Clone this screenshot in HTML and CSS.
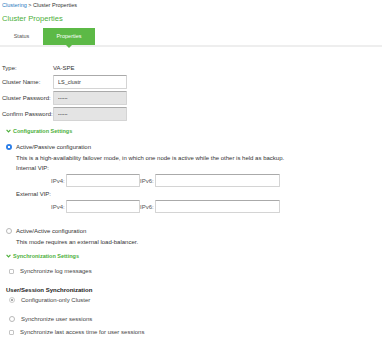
FILE: index.html
```html
<!DOCTYPE html>
<html lang="en">
<head>
  <meta charset="UTF-8" />
  <meta name="viewport" content="width=device-width, initial-scale=1.0" />
  <title>Cluster Properties</title>
  <link rel="stylesheet" href="styles.css">
</head>
<body>
  <div class="crumbs"><a href="#">Clustering</a> &gt; Cluster Properties</div>
  <h1 class="title">Cluster Properties</h1>
  <div class="tabs">
    <span class="tab">Status</span>
    <span class="tab active">Properties</span>
  </div>

  <div class="fields">
    <span>Type:</span><span>VA-SPE</span>
    <span>Cluster Name:</span><input class="box" type="text" value="LS_clustr" />
    <span>Cluster Password:</span><input class="box locked" type="text" value="••••••" />
    <span>Confirm Password:</span><input class="box locked" type="text" value="••••••" />
  </div>

  <div class="section-head head-config">
    <svg class="chev" viewBox="0 0 6 4"><path d="M0.7 0.7 L3 3 L5.3 0.7" /></svg>
    Configuration Settings
  </div>

  <div class="option opt-passive"><span class="radio on"></span>Active/Passive configuration</div>
  <p class="note">This is a high-availability failover mode, in which one node is active while the other is held as backup.</p>
  <div class="vip-label">Internal VIP:</div>
  <div class="vip-row">
    <span class="ip">IPv4:</span><input class="box v4" type="text" />
    <span class="ip">IPv6:</span><input class="box v6" type="text" />
  </div>
  <div class="vip-label ext">External VIP:</div>
  <div class="vip-row">
    <span class="ip">IPv4:</span><input class="box v4" type="text" />
    <span class="ip">IPv6:</span><input class="box v6" type="text" />
  </div>

  <div class="option opt-active"><span class="radio"></span>Active/Active configuration</div>
  <p class="note">This mode requires an external load-balancer.</p>

  <div class="section-head head-sync">
    <svg class="chev" viewBox="0 0 6 4"><path d="M0.7 0.7 L3 3 L5.3 0.7" /></svg>
    Synchronization Settings
  </div>

  <div class="check-row log-row"><span class="check"></span>Synchronize log messages</div>

  <div class="sub-head">User/Session Synchronization</div>
  <div class="check-row"><span class="radio dim"></span>Configuration-only Cluster</div>
  <div class="check-row sess-row"><span class="radio"></span>Synchronize user sessions</div>
  <div class="check-row access-row"><span class="check"></span>Synchronize last access time for user sessions</div>
</body>
</html>
```

FILE: styles.css
```css
body {
  margin: 0;
  padding: 0 0 0 2px;
  font-family: "Liberation Sans", Arial, sans-serif;
  font-size: 6px;
  color: #333;
  background: white;
}
.crumbs {
  padding-top: 1px;
  line-height: 8px;
  font-size: 5.5px;
}
.crumbs a {
  color: #2a7ac0;
  text-decoration: none;
}
.title {
  margin: 5px 0 0;
  font-size: 7.6px;
  line-height: 10px;
  font-weight: normal;
  color: #4caf3a;
}
.tabs {
  display: flex;
  margin: 4px 0 0 -2px;
  height: 17px;
  border-bottom: 2px solid #eeeeee;
}
.tab {
  width: 43px;
  line-height: 17px;
  text-align: center;
  font-size: 5.5px;
  color: #555;
}
.tab.active {
  position: relative;
  width: 52px;
  background: #5cb946;
  color: white;
}
.tab.active::after {
  content: "";
  position: absolute;
  left: 23px;
  bottom: -3px;
  border-left: 3px solid transparent;
  border-right: 3px solid transparent;
  border-top: 3px solid #5cb946;
}
.fields {
  display: grid;
  grid-template-columns: 51px 74px;
  row-gap: 2px;
  align-items: center;
  margin-top: 16px;
}
.fields span {
  line-height: 10px;
}
.box {
  box-sizing: border-box;
  height: 14px;
  margin: 0;
  padding: 0 4px;
  border: 1px solid #d4d4d4;
  border-top-color: #aaa;
  border-radius: 1px;
  font-family: inherit;
  font-size: 5.5px;
  color: #333;
  background: white;
}
.box.locked {
  background: #e4e4e4;
  font-size: 4px;
  letter-spacing: 0.2px;
  color: #666;
}
.section-head {
  display: flex;
  align-items: center;
  gap: 2px;
  padding-left: 4px;
  line-height: 10px;
  font-weight: bold;
  font-size: 5.5px;
  color: #4caf3a;
}
.chev {
  width: 5px;
  height: 4px;
}
.chev path {
  fill: none;
  stroke: #4caf3a;
  stroke-width: 1.4;
}
.head-config { margin-top: 5px; }
.head-sync { margin-top: 4px; }
.option {
  display: flex;
  align-items: center;
  gap: 4px;
  padding-left: 4px;
  line-height: 10px;
}
.opt-passive { margin-top: 6px; }
.opt-active { margin-top: 13px; }
.radio {
  box-sizing: border-box;
  width: 6px;
  height: 6px;
  border: 1px solid #b8b8b8;
  border-radius: 50%;
  background: white;
}
.radio.on {
  border: none;
  background: radial-gradient(circle, white 0 1px, #2f80e8 1.4px);
}
.radio.dim {
  border-color: #ccc;
  background: radial-gradient(circle, #aaa 0 0.8px, white 1.1px);
}
.check {
  box-sizing: border-box;
  width: 5px;
  height: 5px;
  border: 1px solid #c4c4c4;
  border-radius: 1px;
  background: white;
}
.note {
  margin: 1px 0 0;
  padding-left: 14px;
  line-height: 10px;
}
.vip-label {
  padding-left: 14px;
  line-height: 10px;
}
.vip-label.ext { margin-top: 2px; }
.vip-row {
  display: flex;
  align-items: center;
  margin-top: 1px;
  padding-left: 49px;
}
.vip-row .box {
  height: 13px;
}
.ip {
  width: 15px;
  color: #555;
}
.v4 { width: 74px; }
.v6 { width: 125px; }
.check-row {
  display: flex;
  align-items: center;
  gap: 6px;
  padding-left: 7px;
  line-height: 10px;
  color: #444;
}
.log-row { margin-top: 5px; }
.sub-head {
  margin-top: 9px;
  padding-left: 4px;
  line-height: 10px;
  font-weight: bold;
  color: #222;
}
.sess-row { margin-top: 9px; }
.access-row { margin-top: 3px; }
```
